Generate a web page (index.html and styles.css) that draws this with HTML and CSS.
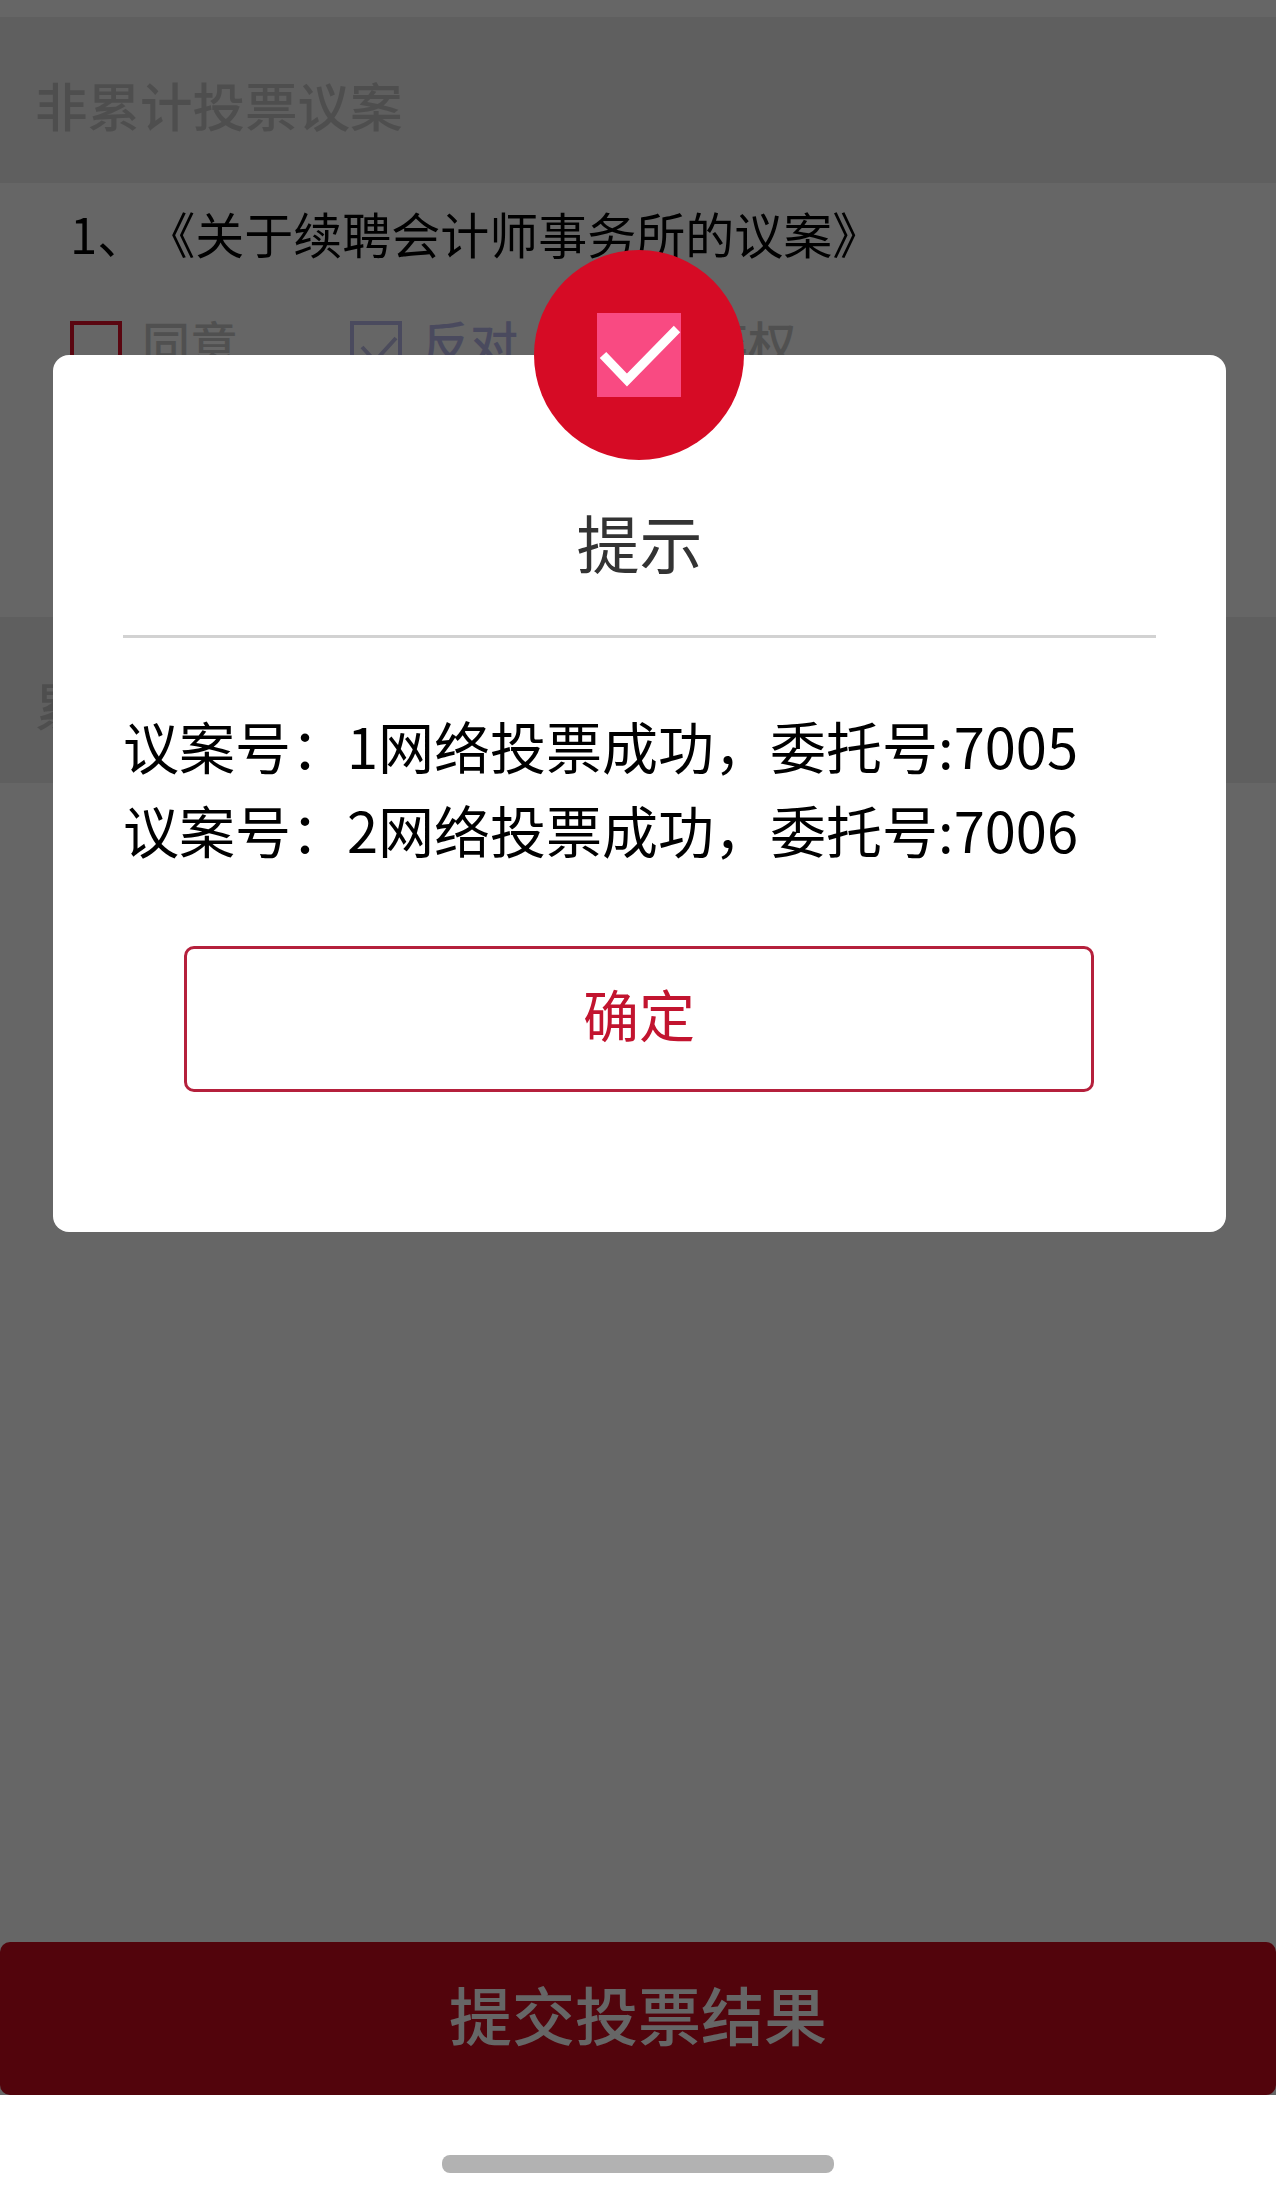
FILE: index.html
```html
<!DOCTYPE html>
<html lang="zh-CN">

<head>
    <meta charset="UTF-8">
    <title>提交投票结果</title>
    <link rel="stylesheet" href="styles.css">
</head>

<body>

    <main class="page">
        <h2 class="sec-head">非累计投票议案</h2>
        <section class="motion">
            <p class="motion-title">1、《关于续聘会计师事务所的议案》</p>
            <div class="options">
                <label class="option option-agree"><span class="box"></span>同意</label>
                <label class="option option-against">
                    <span class="box">
                        <svg width="46" height="46" viewBox="0 0 46 46"><polyline points="8,22 21,36 42,13" fill="none" stroke="#bdbde6" stroke-width="4"/></svg>
                    </span>反对
                </label>
                <label class="option option-abstain"><span class="box"></span>弃权</label>
            </div>
        </section>
        <h2 class="sec-head">累积投票议案</h2>
        <button class="submit-btn">提交投票结果</button>
    </main>

    <div class="home-area"><span class="home-bar"></span></div>

    <div class="dim"></div>

    <section class="modal">
        <div class="modal-icon">
            <svg width="84" height="84" viewBox="0 0 84 84">
                <rect width="84" height="84" fill="#f94a82"/>
                <polyline points="6,42 30,67 80,16" fill="none" stroke="#fff" stroke-width="9"/>
            </svg>
        </div>
        <h3 class="modal-title">提示</h3>
        <div class="modal-text">
            <p>议案号：1网络投票成功，委托号:7005</p>
            <p>议案号：2网络投票成功，委托号:7006</p>
        </div>
        <button class="modal-btn">确定</button>
    </section>

</body>

</html>
```

FILE: styles.css
```css
* {
    box-sizing: border-box;
}

body {
    position: relative;
    margin: 0;
    width: 1276px;
    height: 2193px;
    overflow: hidden;
    background-color: white;
    font-family: "Noto Sans CJK SC", "Noto Sans", sans-serif;
    text-spacing-trim: space-all;
}

h2,
h3,
p {
    margin: 0;
    font-weight: normal;
}

.page {
    display: flex;
    flex-direction: column;
    height: 2095px;
    padding-top: 17px;
}

.sec-head {
    height: 166px;
    padding-left: 35px;
    background-color: #eeeeee;
    color: #c4c4c4;
    font-size: 52.5px;
    font-weight: 500;
    line-height: 174px;
}

.motion {
    height: 434px;
    padding: 20px 70px 0;
}

.motion-title {
    color: black;
    font-size: 49px;
    line-height: 60px;
}

.options {
    display: flex;
    margin-top: 58px;
}

.option {
    display: flex;
    align-items: flex-start;
    gap: 20px;
    font-size: 48px;
    font-weight: 500;
    line-height: 40px;
    color: #c8c8c8;
}

.box {
    display: block;
    width: 52px;
    height: 52px;
    border: 4px solid #e0102a;
}

.box svg {
    display: block;
}

.option-against {
    margin-left: 112px;
    color: #b9b9ec;
}

.option-against .box {
    border-color: #b9b9ec;
}

.option-abstain {
    margin-left: 110px;
}

.submit-btn {
    margin-top: auto;
    height: 153px;
    padding-bottom: 14px;
    border: none;
    border-radius: 10px;
    background-color: #cd0a20;
    color: white;
    font-family: inherit;
    font-size: 63px;
    font-weight: 500;
}

.home-area {
    display: flex;
    justify-content: center;
    padding-top: 60px;
}

.home-bar {
    width: 392px;
    height: 18px;
    border-radius: 8px;
    background-color: #b2b2b2;
}

/* grey layer over the page, stops above the home bar */
.dim {
    position: absolute;
    top: 0;
    left: 0;
    width: 100%;
    height: 2095px;
    background-color: rgba(0, 0, 0, .6);
}

.modal {
    position: absolute;
    top: 355px;
    left: 53px;
    width: 1173px;
    height: 877px;
    padding: 150px 70px 0;
    border-radius: 16px;
    background-color: white;
}

.modal-icon {
    position: absolute;
    top: -105px;
    left: 481px;
    display: flex;
    align-items: center;
    justify-content: center;
    width: 210px;
    height: 210px;
    border-radius: 50%;
    background-color: #d60b25;
}

.modal-icon svg {
    display: block;
}

.modal-title {
    height: 133px;
    border-bottom: 3px solid #d2d2d2;
    color: #333333;
    font-size: 63px;
    line-height: 72px;
    text-align: center;
}

.modal-text {
    margin-top: 65px;
    color: black;
    font-size: 56px;
    line-height: 84px;
}

.modal-btn {
    display: block;
    width: 910px;
    height: 146px;
    margin: 75px 0 0 61px;
    padding-bottom: 14px;
    border: 3px solid #b5203c;
    border-radius: 10px;
    background-color: white;
    color: #c2142f;
    font-family: inherit;
    font-size: 56px;
}
```
